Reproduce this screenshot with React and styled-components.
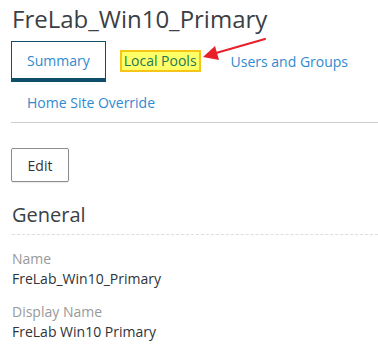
import React from 'react';
import styled, { createGlobalStyle } from 'styled-components';

const GlobalStyle = createGlobalStyle`
  html, body {
    margin: 0;
    padding: 0;
    background: #ffffff;
  }
  body {
    font-family: "Open Sans", "Noto Sans", sans-serif;
  }
`;

const Page = styled.div`
  position: relative;
  width: 378px;
  height: 345px;
  padding: 0 0 0 11px;
  box-sizing: border-box;
  overflow: hidden;
`;

const Title = styled.h1`
  margin: 0;
  padding: 3px 0 0 1px;
  font-size: 24px;
  line-height: 32px;
  font-weight: 400;
  color: #3b4045;
`;

const Tabs = styled.nav`
  display: flex;
  flex-wrap: wrap;
  margin-top: 6px;
  border-bottom: 1px solid #cccccc;
`;

const Tab = styled.a`
  display: flex;
  align-items: center;
  box-sizing: border-box;
  height: ${({ active }) => (active ? '41px' : '40px')};
  padding: 0 ${({ active }) => (active ? '15px' : '16px')};
  font-size: 14px;
  color: #2f8ad0;
  text-decoration: none;
  border: ${({ active }) => (active ? '1.5px solid #0d4f6a' : 'none')};
  border-bottom-width: ${({ active }) => (active ? '4px' : '0')};
  padding-top: ${({ active }) => (active ? '1px' : '0')};
`;

const Highlight = styled.span`
  margin: 0 -2px;
  padding: 0 2px;
  line-height: 18px;
  background: #ffff66;
  border: 2px solid #f5c518;
  color: #22775a;
`;

const Arrow = styled.svg`
  position: absolute;
  left: 200px;
  top: 34px;
  pointer-events: none;
`;

const EditButton = styled.button`
  margin-top: 25px;
  width: 58px;
  height: 34px;
  font-family: inherit;
  font-size: 14px;
  color: #333333;
  background: #ffffff;
  border: 1px solid #8c8c8c;
  border-radius: 2px;
  box-shadow: 0 1px 1px rgba(0, 0, 0, 0.08);
`;

const SectionTitle = styled.h2`
  margin: 19px 0 0 1px;
  padding-bottom: 5px;
  font-size: 20px;
  line-height: 28px;
  font-weight: 400;
  color: #3b4045;
  border-bottom: 1px dashed #dddddd;
`;

const Fields = styled.dl`
  margin: 14px 0 0 1px;
`;

const Label = styled.dt`
  font-size: 14px;
  line-height: 19px;
  color: #999999;
`;

const Value = styled.dd`
  margin: 1px 0 14px 0;
  font-size: 14px;
  line-height: 19px;
  font-weight: 500;
  color: #2e3338;
`;

export default function App() {
  return (
    <>
      <GlobalStyle />
      <Page>
        <Title>FreLab_Win10_Primary</Title>
        <Tabs>
          <Tab active>Summary</Tab>
          <Tab>
            <Highlight>Local Pools</Highlight>
          </Tab>
          <Tab>Users and Groups</Tab>
          <Tab>Home Site Override</Tab>
        </Tabs>
        <Arrow width="70" height="30" viewBox="0 0 70 30">
          <line x1="65" y1="5" x2="16" y2="19" stroke="#e8202a" strokeWidth="2" strokeLinecap="round" />
          <polygon points="3,23 15,12 19,26" fill="#e8202a" />
        </Arrow>
        <EditButton>Edit</EditButton>
        <SectionTitle>General</SectionTitle>
        <Fields>
          <Label>Name</Label>
          <Value>FreLab_Win10_Primary</Value>
          <Label>Display Name</Label>
          <Value>FreLab Win10 Primary</Value>
        </Fields>
      </Page>
    </>
  );
}
